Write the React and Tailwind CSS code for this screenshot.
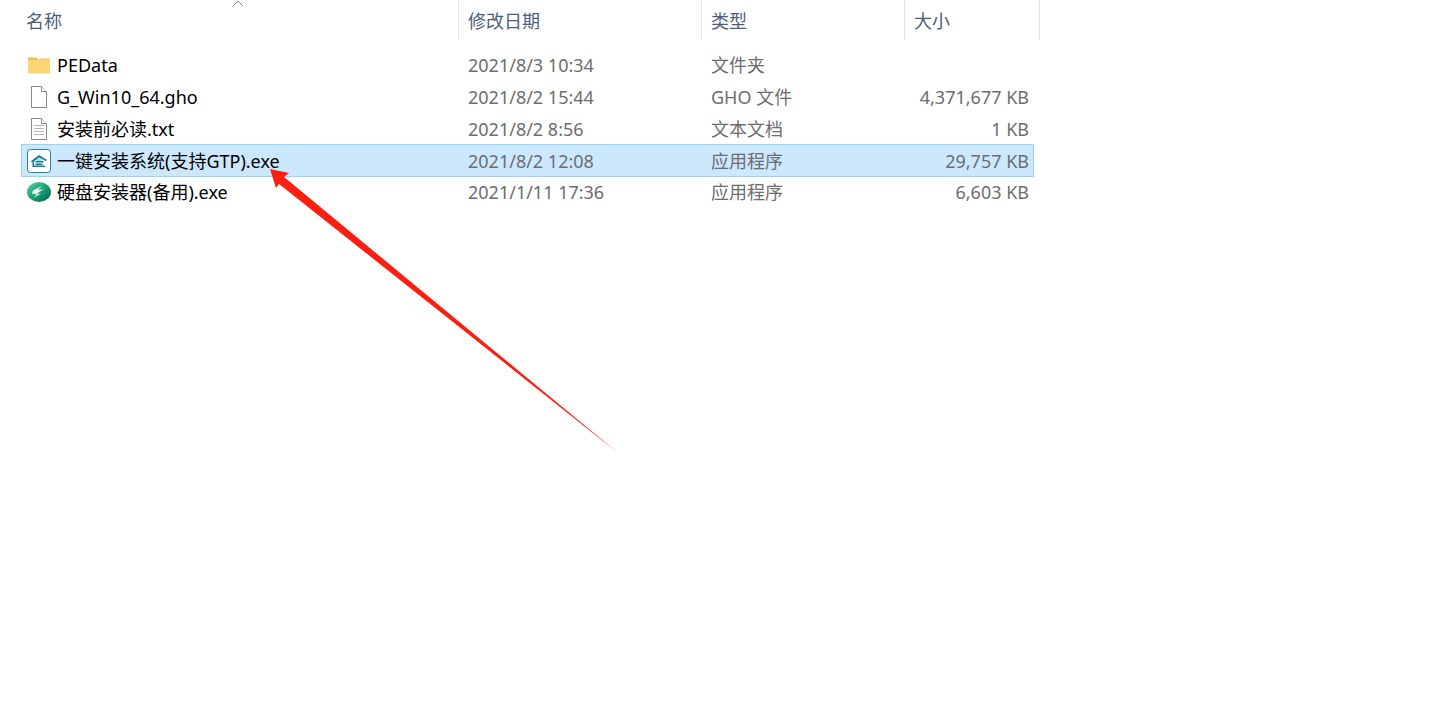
const rows = [
  { name: 'PEData', date: '2021/8/3 10:34', type: '文件夹', size: '', icon: 'folder' },
  { name: 'G_Win10_64.gho', date: '2021/8/2 15:44', type: 'GHO 文件', size: '4,371,677 KB', icon: 'file' },
  { name: '安装前必读.txt', date: '2021/8/2 8:56', type: '文本文档', size: '1 KB', icon: 'text' },
  { name: '一键安装系统(支持GTP).exe', date: '2021/8/2 12:08', type: '应用程序', size: '29,757 KB', icon: 'setup', selected: true },
  { name: '硬盘安装器(备用).exe', date: '2021/1/11 17:36', type: '应用程序', size: '6,603 KB', icon: 'disk' },
]

function FileIcon({ icon }) {
  if (icon === 'folder') {
    return (
      <svg width="24" height="24" viewBox="0 0 24 24">
        <path d="M1 4.5h8.5l2 2.5H1z" fill="#f0bd4c" />
        <path d="M1 7h22v13.5H1z" fill="#fcd672" />
        <path d="M1 7h10.500l1.500-1.500H23V7z" fill="#f5c85f" />
      </svg>
    )
  }
  if (icon === 'file' || icon === 'text') {
    return (
      <svg width="24" height="24" viewBox="0 0 24 24">
        <path d="M4.500 1.500h10l5 5v16h-15z" fill="#fff" stroke="#8a8a8a" />
        <path d="M14.500 1.500v5h5" fill="#fff" stroke="#8a8a8a" />
        {icon === 'text' && (
          <path d="M7 8.500h10M7 11.500h10M7 14.500h10M7 17.500h10" stroke="#b5b5b5" />
        )}
      </svg>
    )
  }
  if (icon === 'setup') {
    return (
      <svg width="24" height="24" viewBox="0 0 24 24">
        <rect x="0.500" y="0.500" width="23" height="23" rx="3" fill="#fff" stroke="#2a7fa8" />
        <path d="M3.500 12.500L12 6l8 5-1.500 1L12 8.500 7 12.500v4h11v1.500H5.500v-5z" fill="#13799f" />
        <path d="M8.500 12h8v1.500h-8zM8.500 14.500h7V16h-7z" fill="#13799f" />
        <path d="M10 10.500h4v1h-4z" fill="#4eb2d2" />
      </svg>
    )
  }
  return (
    <svg width="24" height="24" viewBox="0 0 24 24">
      <defs>
        <linearGradient id="disk" x1="0" y1="0" x2="1" y2="1">
          <stop offset="0" stopColor="#63c9b0" />
          <stop offset="0.55" stopColor="#12a06c" />
          <stop offset="1" stopColor="#0c4f63" />
        </linearGradient>
      </defs>
      <ellipse cx="12" cy="12" rx="12" ry="10" fill="url(#disk)" />
      <path d="M6 10.500l9-4.500-4 4 6-1-8 5 5-.5-7 4 3-4-5 .5z" fill="#eaf7f2" />
    </svg>
  )
}

function Row({ row }) {
  return (
    <div
      className={`grid grid-cols-[437px_243px_203px_124px] h-8 items-center border ml-[21px] w-[1013px] ${
        row.selected ? 'bg-[#cce8ff] border-[#99d1ff] h-[33px] -my-px relative' : 'border-transparent'
      }`}
    >
      <div className="flex items-center pl-[5px] gap-[6px]">
        <FileIcon icon={row.icon} />
        <span className="text-black">{row.name}</span>
      </div>
      <span className="pl-[9px] text-[#6d6d6d]">{row.date}</span>
      <span className="pl-[9px] text-[#6d6d6d]">{row.type}</span>
      <span className="text-right text-[#6d6d6d]">{row.size}</span>
    </div>
  )
}

export default function App() {
  return (
    <div className="relative w-[1447px] h-[720px] overflow-hidden bg-white text-[18px] leading-6 font-['Noto_Sans','Noto_Sans_CJK_SC',sans-serif]">
      {/* Column headers */}
      <div className="flex h-10 w-[1040px] text-[#4c607a]">
        <div className="relative w-[459px] pl-[26px] pt-[9px] border-r border-[#e5e5e5]">
          名称
          <svg className="absolute left-[232px] top-0" width="12" height="7" viewBox="0 0 12 7">
            <path d="M1 6l5-5 5 5" fill="none" stroke="#8a8a8a" />
          </svg>
        </div>
        <div className="w-[243px] pl-[9px] pt-[9px] border-r border-[#e5e5e5]">修改日期</div>
        <div className="w-[203px] pl-[9px] pt-[9px] border-r border-[#e5e5e5]">类型</div>
        <div className="w-[135px] pl-[9px] pt-[9px] border-r border-[#e5e5e5]">大小</div>
      </div>

      {/* File rows */}
      <div className="pt-[9px]">
        {rows.map((row) => (
          <Row key={row.name} row={row} />
        ))}
      </div>

      {/* Red annotation arrow */}
      <svg className="absolute left-0 top-0 pointer-events-none" width="1447" height="720" viewBox="0 0 1447 720">
        <path d="M270 169L289 173L284 177L618 453L279 184L276 188z" fill="#fb1f12" />
      </svg>
    </div>
  )
}
